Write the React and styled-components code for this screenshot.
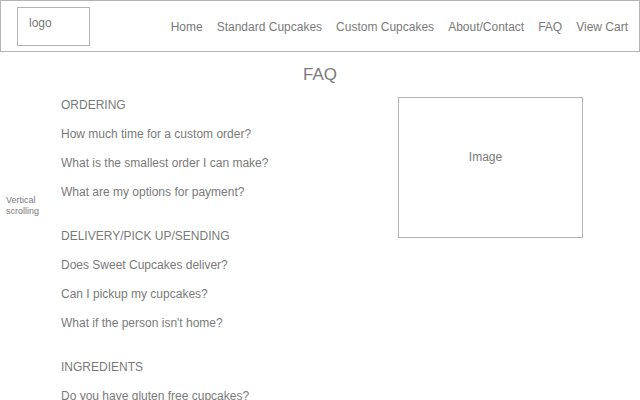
import React from 'react';
import styled, { createGlobalStyle } from 'styled-components';

const GlobalStyle = createGlobalStyle`
  body {
    margin: 0;
    background: #fff;
    font-family: "Liberation Sans", Arial, sans-serif;
    color: #7a7a7a;
  }
`;

const Header = styled.header`
  display: flex;
  align-items: center;
  justify-content: space-between;
  height: 50px;
  border: 1px solid #b4b4b4;
  padding: 0 11px 0 16px;
`;

const LogoBox = styled.div`
  width: 73px;
  height: 39px;
  border: 1px solid #b4b4b4;
  padding: 8px 0 0 11px;
  box-sizing: border-box;
  font-size: 12px;
  line-height: 14px;
  align-self: flex-start;
  margin-top: 6px;
`;

const Nav = styled.nav`
  display: flex;
  gap: 14px;
  font-size: 12px;
  margin-top: 2px;
`;

const NavLink = styled.span`
  white-space: nowrap;
`;

const Title = styled.h1`
  margin: 13px 0 12px;
  font-size: 17px;
  line-height: 20px;
  font-weight: normal;
  text-align: center;
`;

const Body = styled.main`
  display: grid;
  grid-template-columns: 61px 337px 185px;
`;

const SideNote = styled.div`
  padding: 98px 0 0 6px;
  font-size: 9px;
  line-height: 11px;
`;

const FaqList = styled.div`
  display: flex;
  flex-direction: column;
  gap: 28px;
`;

const Section = styled.section`
  display: flex;
  flex-direction: column;
  gap: 13px;
  font-size: 12px;
  line-height: 16px;
`;

const SectionHeading = styled.div`
  text-transform: uppercase;
`;

const Question = styled.div`
  white-space: nowrap;
`;

const ImageBox = styled.div`
  height: 141px;
  border: 1px solid #b4b4b4;
  box-sizing: border-box;
  padding: 51px 10px 0 0;
  text-align: center;
  font-size: 12px;
  line-height: 16px;
`;

const sections = [
  {
    heading: 'Ordering',
    questions: [
      'How much time for a custom order?',
      'What is the smallest order I can make?',
      'What are my options for payment?',
    ],
  },
  {
    heading: 'Delivery/Pick up/Sending',
    questions: [
      'Does Sweet Cupcakes deliver?',
      'Can I pickup my cupcakes?',
      "What if the person isn't home?",
    ],
  },
  {
    heading: 'Ingredients',
    questions: ['Do you have gluten free cupcakes?'],
  },
];

const links = ['Home', 'Standard Cupcakes', 'Custom Cupcakes', 'About/Contact', 'FAQ', 'View Cart'];

const App = () => (
  <>
    <GlobalStyle />
    <Header>
      <LogoBox>logo</LogoBox>
      <Nav>
        {links.map((link) => (
          <NavLink key={link}>{link}</NavLink>
        ))}
      </Nav>
    </Header>
    <Title>FAQ</Title>
    <Body>
      <SideNote>
        Vertical
        <br />
        scrolling
      </SideNote>
      <FaqList>
        {sections.map((section) => (
          <Section key={section.heading}>
            <SectionHeading>{section.heading}</SectionHeading>
            {section.questions.map((q) => (
              <Question key={q}>{q}</Question>
            ))}
          </Section>
        ))}
      </FaqList>
      <div>
        <ImageBox>Image</ImageBox>
      </div>
    </Body>
  </>
);

export default App;
